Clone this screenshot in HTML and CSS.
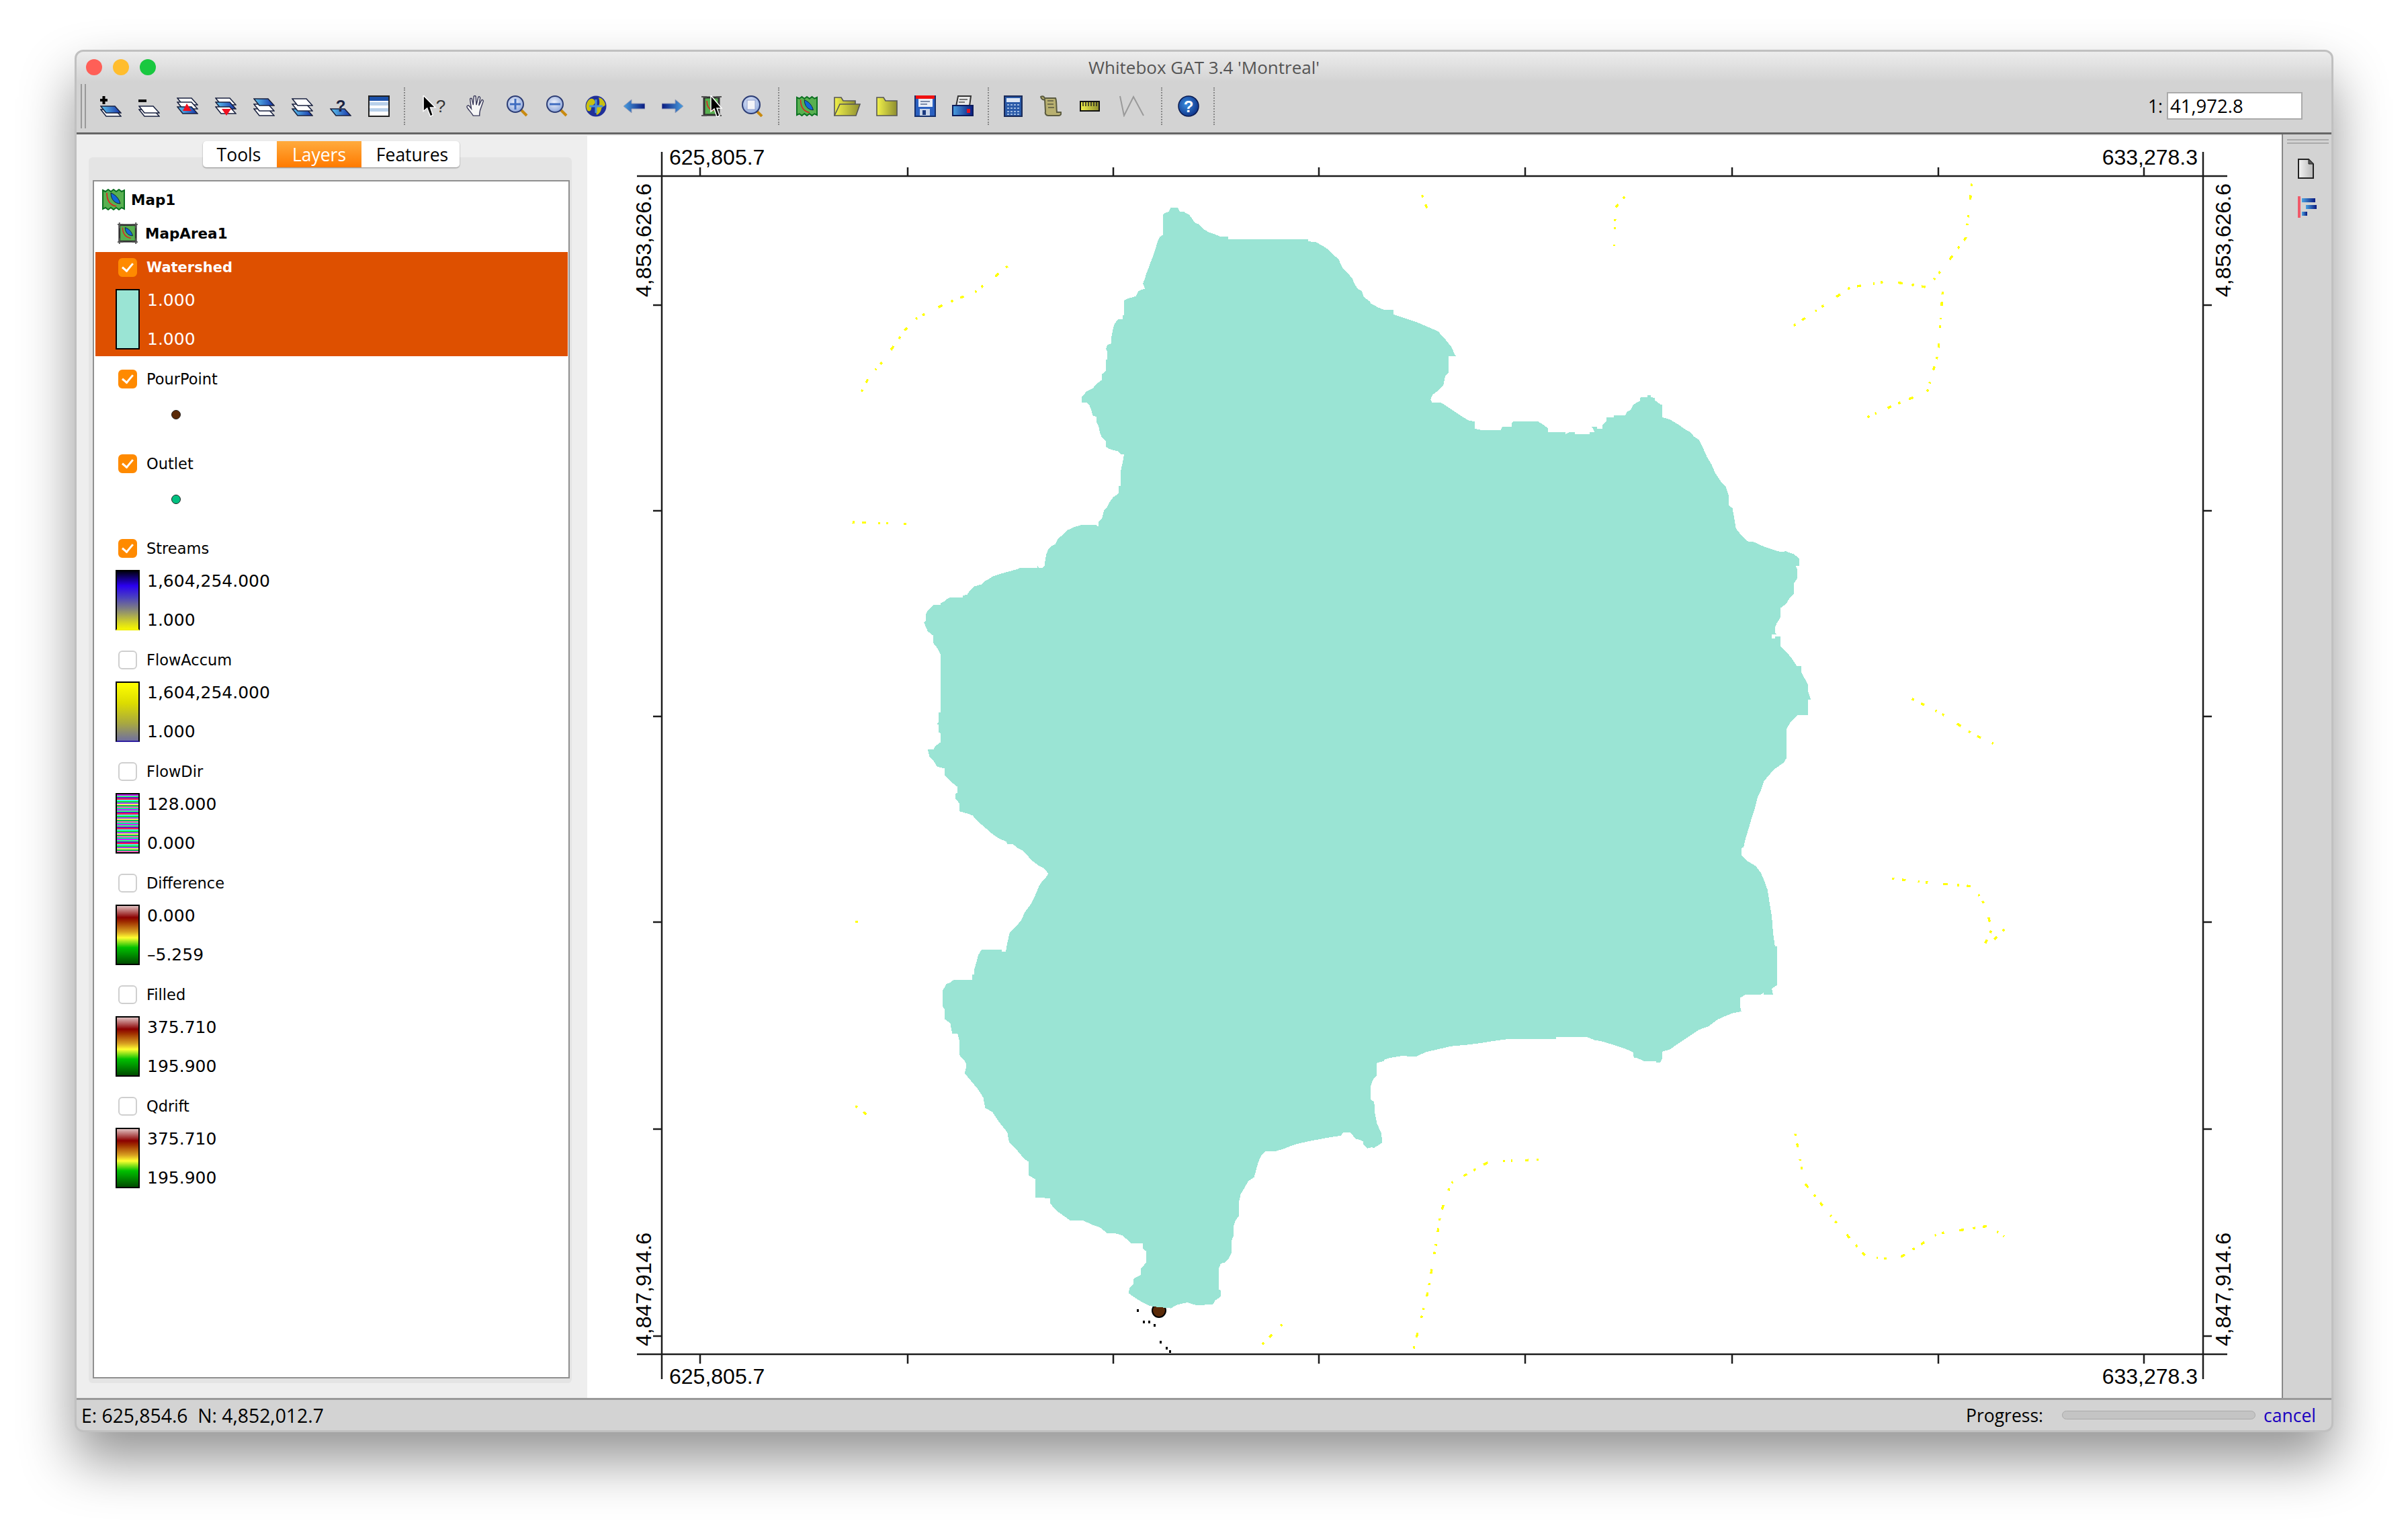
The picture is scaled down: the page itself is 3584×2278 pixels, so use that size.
FILE: index.html
```html
<!DOCTYPE html>
<html lang="en">

<head>
  <meta charset="UTF-8">
  <title>Whitebox GAT 3.4 'Montreal'</title>
  <link rel="stylesheet" href="styles.css">
</head>

<body>

  <!-- toolbar icons -->
  <svg class="icon-defs" xmlns="http://www.w3.org/2000/svg">
    <defs>
      <linearGradient id="g-blue" x1="0" y1="0" x2="1" y2="0"><stop offset="0" stop-color="#5fc8f0"/><stop offset="1" stop-color="#1530a8"/></linearGradient>
      <linearGradient id="g-arrow-l" x1="0" y1="0" x2="1" y2="0"><stop offset="0" stop-color="#4aa0e0"/><stop offset="1" stop-color="#0a1a80"/></linearGradient>
      <linearGradient id="g-arrow-r" x1="0" y1="0" x2="1" y2="0"><stop offset="0" stop-color="#0a1a80"/><stop offset="1" stop-color="#4aa0e0"/></linearGradient>
      <linearGradient id="g-yellow" x1="0" y1="0" x2="1" y2="0"><stop offset="0" stop-color="#f2f24a"/><stop offset="1" stop-color="#8e8e30"/></linearGradient>
      <linearGradient id="g-page" x1="0" y1="0" x2="1" y2="0"><stop offset="0" stop-color="#f4f4f4"/><stop offset="1" stop-color="#b8b8b8"/></linearGradient>
      <radialGradient id="g-glass" cx=".45" cy=".4" r=".6"><stop offset="0" stop-color="#eef2fb"/><stop offset="1" stop-color="#8fa8dc"/></radialGradient>
      <radialGradient id="g-help" cx=".4" cy=".4" r=".7"><stop offset="0" stop-color="#3a8ee0"/><stop offset="1" stop-color="#0a2a80"/></radialGradient>
    </defs>

    <symbol id="plate-blue" viewBox="0 0 32 12"><polygon points="1,1 22,1 31,11 9,11" fill="url(#g-blue)" stroke="#1a2240" stroke-width="1.6"/></symbol>
    <symbol id="plate-white" viewBox="0 0 32 12"><polygon points="1,1 22,1 31,11 9,11" fill="#fff" stroke="#1a2240" stroke-width="1.6"/></symbol>

    <symbol id="i-add" viewBox="0 0 32 32">
      <path d="M3.5 1h4v4h3.5v4H7.500v4h-4V9H0V5h3.500z" fill="#000"/>
      <use href="#plate-white" x="0" y="20" width="32" height="12"/>
      <use href="#plate-blue" x="0" y="15" width="32" height="12"/>
    </symbol>
    <symbol id="i-remove" viewBox="0 0 32 32">
      <rect x="0" y="6" width="12" height="4" fill="#111"/>
      <use href="#plate-white" x="0" y="20" width="32" height="12"/>
      <use href="#plate-white" x="0" y="15" width="32" height="12"/>
    </symbol>
    <symbol id="i-raise" viewBox="0 0 32 32">
      <use href="#plate-white" x="0" y="3" width="32" height="12"/>
      <use href="#plate-white" x="0" y="9" width="32" height="12"/>
      <use href="#plate-blue" x="0" y="16" width="32" height="12"/>
      <polygon points="15,12 22,23 9,23" fill="#f01020"/>
    </symbol>
    <symbol id="i-lower" viewBox="0 0 32 32">
      <use href="#plate-white" x="0" y="3" width="32" height="12"/>
      <use href="#plate-blue" x="0" y="9" width="32" height="12"/>
      <use href="#plate-white" x="0" y="16" width="32" height="12"/>
      <polygon points="10,20 24,20 17,30" fill="#f01020"/>
    </symbol>
    <symbol id="i-top" viewBox="0 0 32 32">
      <use href="#plate-white" x="0" y="19" width="32" height="12"/>
      <use href="#plate-white" x="0" y="12" width="32" height="12"/>
      <use href="#plate-blue" x="0" y="4" width="32" height="12"/>
    </symbol>
    <symbol id="i-bottom" viewBox="0 0 32 32">
      <use href="#plate-blue" x="0" y="19" width="32" height="12"/>
      <use href="#plate-white" x="0" y="12" width="32" height="12"/>
      <use href="#plate-white" x="0" y="4" width="32" height="12"/>
    </symbol>
    <symbol id="i-layer-plate" viewBox="0 0 32 32">
      <use href="#plate-blue" x="0" y="19" width="32" height="12"/>
    </symbol>
    <symbol id="i-table" viewBox="0 0 32 32">
      <rect x="1" y="1" width="30" height="30" fill="#fff" stroke="#222" stroke-width="2"/>
      <rect x="2" y="2" width="28" height="6" fill="#1b50a8"/>
      <rect x="2" y="10" width="28" height="5" fill="#b8d0ea"/>
      <rect x="2" y="19" width="28" height="5" fill="#b8d0ea"/>
    </symbol>
    <symbol id="i-cursor" viewBox="0 0 40 34">
      <polygon points="1,0 1,25 7,20 12,33 16,31 12,19 20,19" fill="#000" stroke="#fff" stroke-width="1.500"/>
    </symbol>
    <symbol id="i-hand" viewBox="0 0 32 34">
      <path d="M11 32C8 27 2 21 1 18c0-2 2-3 4-1l3 4L6 6c0-2 3-2 3 0l2 9 1-13c0-2 3-2 3 0l1 13 3-12c1-2 3-1 3 1l-2 12 4-8c1-2 3-1 3 1l-5 14c-1 4-1 7-1 9z" fill="#f6f6f6" stroke="#3a3a5a" stroke-width="1.500"/>
    </symbol>
    <symbol id="i-zoom-in" viewBox="0 0 32 32">
      <path d="M21 21l9 9" stroke="#c88a10" stroke-width="4"/>
      <circle cx="13" cy="13" r="12" fill="url(#g-glass)" stroke="#2c3c74" stroke-width="2"/>
      <path d="M5 13h16M13 5v16" stroke="#3f6cc0" stroke-width="3"/>
    </symbol>
    <symbol id="i-zoom-out" viewBox="0 0 32 32">
      <path d="M21 21l9 9" stroke="#c88a10" stroke-width="4"/>
      <circle cx="13" cy="13" r="12" fill="url(#g-glass)" stroke="#2c3c74" stroke-width="2"/>
      <path d="M5 13h16" stroke="#3f6cc0" stroke-width="3"/>
    </symbol>
    <symbol id="i-globe" viewBox="0 0 32 32">
      <circle cx="16" cy="16" r="15.500" fill="#20309a"/>
      <path d="M6 6c5-3 8 0 9 4-1 4-5 4-6 9 0 4-3 6-6 3C0 16 2 10 6 6zM20 3c5 1 9 5 10 11-2 3-5 2-6 6-1 5-4 8-7 9-1-5-2-9 1-12 4-2 4-7 2-14z" fill="#c8c010"/>
      <path d="M16 6v20M6 16h20" stroke="#4a90d8" stroke-width="3"/>
    </symbol>
    <symbol id="i-arrow-left" viewBox="0 0 32 32">
      <polygon points="0,16 12,6 12,12 32,12 32,20 12,20 12,26" fill="url(#g-arrow-l)" stroke="#9aa0b8" stroke-width="1"/>
    </symbol>
    <symbol id="i-arrow-right" viewBox="0 0 32 32">
      <polygon points="32,16 20,6 20,12 0,12 0,20 20,20 20,26" fill="url(#g-arrow-r)" stroke="#9aa0b8" stroke-width="1"/>
    </symbol>
    <symbol id="i-map" viewBox="0 0 34 32">
      <path d="M1 2l4 2 4-3 4 3 4-3 4 3 4-3 4 3 4-2v28l-4-2-4 3-4-3-4 3-4-3-4 3-4-3-4 2z" fill="#58b050" stroke="#0a7020" stroke-width="2"/>
      <path d="M7 6c0 10 4 18 14 20" fill="none" stroke="#e02020" stroke-width="1.600"/>
      <path d="M13 6c7 3 12 8 14 16-8 0-14-6-14-16z" fill="#1068d8" stroke="#123" stroke-width="1"/>
    </symbol>
    <symbol id="i-maparea" viewBox="0 0 34 34">
      <rect x="4" y="4" width="26" height="26" fill="#58b050" stroke="#333" stroke-width="3"/>
      <path d="M1 3h9M24 3h9M1 31h9M24 31h9M4 0v9M30 0v9M4 25v9M30 25v9" stroke="#555" stroke-width="2"/>
      <path d="M9 8c0 9 3 15 13 17" fill="none" stroke="#e02020" stroke-width="1.500"/>
      <path d="M13 8c6 2 10 6 12 13-7 0-12-5-12-13z" fill="#1068d8" stroke="#123" stroke-width="1"/>
    </symbol>
    <symbol id="i-map-select" viewBox="0 0 32 32">
      <rect x="4" y="3" width="22" height="26" fill="#58b050" stroke="#333" stroke-width="3"/>
      <path d="M0 2h8M22 2h8M0 30h8M22 30h8" stroke="#555" stroke-width="2"/>
      <path d="M8 8c0 8 3 13 10 15" fill="none" stroke="#e02020" stroke-width="1.500"/>
      <polygon points="14,0 14,24 19,20 23,32 27,30 23,19 30,19" fill="#000" stroke="#fff" stroke-width="1.500"/>
    </symbol>
    <symbol id="i-zoom-full" viewBox="0 0 32 32">
      <path d="M21 22l9 9" stroke="#c88a10" stroke-width="4"/>
      <circle cx="14" cy="14" r="13" fill="url(#g-glass)" stroke="#2c3c74" stroke-width="2"/>
      <rect x="8" y="7" width="12" height="14" fill="#f4f4f8" stroke="#8c9ccc" stroke-width="1"/>
    </symbol>
    <symbol id="i-folder-open" viewBox="0 0 40 32">
      <path d="M1 30V3h10l3 5h18v6" fill="url(#g-yellow)" stroke="#555" stroke-width="1.600"/>
      <polygon points="1,30 9,13 39,13 33,30" fill="url(#g-yellow)" stroke="#555" stroke-width="1.600"/>
    </symbol>
    <symbol id="i-folder" viewBox="0 0 32 32">
      <path d="M1 30V3h10l3 5h17v22z" fill="url(#g-yellow)" stroke="#555" stroke-width="1.600"/>
    </symbol>
    <symbol id="i-save" viewBox="0 0 32 32">
      <rect x="1" y="1" width="30" height="30" fill="#2a60c0" stroke="#15306c" stroke-width="2"/>
      <rect x="2" y="0" width="28" height="5" fill="#f01010"/>
      <rect x="6" y="5" width="21" height="12" fill="#e8eef8"/>
      <path d="M9 9h14M9 13h10" stroke="#7a8aa8" stroke-width="2"/>
      <rect x="8" y="20" width="15" height="10" fill="#c8d4e8"/>
      <rect x="12" y="22" width="5" height="7" fill="#1a3a80"/>
    </symbol>
    <symbol id="i-print" viewBox="0 0 32 32">
      <polygon points="9,1 28,1 26,16 6,16" fill="#e8e8e8" stroke="#333" stroke-width="2"/>
      <path d="M11 6h12M10 10h9" stroke="#777" stroke-width="2"/>
      <path d="M1 15h30v15H1z" fill="url(#g-arrow-l)" stroke="#0c1c5c" stroke-width="2"/>
      <rect x="22" y="20" width="5" height="6" fill="#e01020"/>
    </symbol>
    <symbol id="i-calc" viewBox="0 0 28 32">
      <rect x="1" y="1" width="26" height="30" fill="#2a5aa8" stroke="#1a2a58" stroke-width="2"/>
      <rect x="4" y="4" width="20" height="6" fill="#dce6f4"/>
      <path d="M5 14h18M5 19h18M5 24h18M5 28h18" stroke="#9cb8e0" stroke-width="2" stroke-dasharray="3 2"/>
    </symbol>
    <symbol id="i-script" viewBox="0 0 32 32">
      <path d="M1 2c3-2 5 0 6 2h16c2 4 1 14 2 21h6c1 3-1 5-3 5H12c-3 0-5-3-4-6L7 6C5 7 2 6 1 2z" fill="#b8b070" stroke="#5a5a40" stroke-width="2"/>
      <path d="M11 8h9M11 13h9M12 18h9" stroke="#5a5a40" stroke-width="1.600"/>
    </symbol>
    <symbol id="i-ruler" viewBox="0 0 30 32">
      <rect x="1" y="9" width="28" height="14" fill="url(#g-yellow)" stroke="#111" stroke-width="2"/>
      <path d="M5 10v6M9 10v6M13 10v6M17 10v6M21 10v6M25 10v6" stroke="#222" stroke-width="1.500"/>
    </symbol>
    <symbol id="i-line" viewBox="0 0 38 32">
      <path d="M1 1l6 29L21 2l15 28" fill="none" stroke="#9a9a9a" stroke-width="2"/>
    </symbol>
    <symbol id="i-help-disc" viewBox="0 0 32 32">
      <circle cx="16" cy="16" r="15" fill="url(#g-help)" stroke="#0a1a50" stroke-width="1.500"/>
    </symbol>
    <symbol id="i-page" viewBox="0 0 24 30">
      <path d="M1 1h15l7 7v21H1z" fill="url(#g-page)" stroke="#222" stroke-width="2"/>
      <path d="M16 1v7h7" fill="#555" stroke="#222" stroke-width="1"/>
    </symbol>
    <symbol id="i-align" viewBox="0 0 30 32">
      <rect x="0" y="0" width="4" height="32" fill="#f05a6a"/>
      <rect x="6" y="3" width="20" height="6" fill="url(#g-arrow-r)" transform="rotate(180 16 6)"/>
      <rect x="12" y="13" width="16" height="6" fill="url(#g-arrow-l)"/>
      <rect x="6" y="23" width="8" height="6" fill="url(#g-arrow-l)"/>
    </symbol>
  </svg>

  <div class="window">
    <div class="titlebar">
      <span class="light red"></span>
      <span class="light yellow"></span>
      <span class="light green"></span>
      <span class="title">Whitebox GAT 3.4 'Montreal'</span>
    </div>

    <div class="toolbar">
      <div class="gripper"></div>

      <div class="group g1">
        <span class="tool"><svg class="ico"><use href="#i-add"/></svg></span>
        <span class="tool"><svg class="ico"><use href="#i-remove"/></svg></span>
        <span class="tool"><svg class="ico"><use href="#i-raise"/></svg></span>
        <span class="tool"><svg class="ico"><use href="#i-lower"/></svg></span>
        <span class="tool"><svg class="ico"><use href="#i-top"/></svg></span>
        <span class="tool"><svg class="ico"><use href="#i-bottom"/></svg></span>
        <span class="tool"><svg class="ico" viewBox="0 0 32 32"><use href="#i-layer-plate"/><text x="16" y="24" class="icon-q">?</text></svg></span>
        <span class="tool"><svg class="ico"><use href="#i-table"/></svg></span>
      </div>
      <div class="sep"></div>

      <div class="group g2">
        <span class="tool"><svg class="ico wide" viewBox="0 0 40 32"><use href="#i-cursor"/><text x="28" y="25" class="icon-q dark">?</text></svg></span>
        <span class="tool"><svg class="ico"><use href="#i-hand"/></svg></span>
        <span class="tool"><svg class="ico"><use href="#i-zoom-in"/></svg></span>
        <span class="tool"><svg class="ico"><use href="#i-zoom-out"/></svg></span>
        <span class="tool"><svg class="ico"><use href="#i-globe"/></svg></span>
        <span class="tool"><svg class="ico"><use href="#i-arrow-left"/></svg></span>
        <span class="tool"><svg class="ico"><use href="#i-arrow-right"/></svg></span>
        <span class="tool"><svg class="ico"><use href="#i-map-select"/></svg></span>
        <span class="tool"><svg class="ico"><use href="#i-zoom-full"/></svg></span>
      </div>
      <div class="sep"></div>

      <div class="group g3">
        <span class="tool"><svg class="ico"><use href="#i-map"/></svg></span>
        <span class="tool"><svg class="ico wide"><use href="#i-folder-open"/></svg></span>
        <span class="tool"><svg class="ico"><use href="#i-folder"/></svg></span>
        <span class="tool"><svg class="ico"><use href="#i-save"/></svg></span>
        <span class="tool"><svg class="ico"><use href="#i-print"/></svg></span>
      </div>
      <div class="sep"></div>

      <div class="group g4">
        <span class="tool"><svg class="ico"><use href="#i-calc"/></svg></span>
        <span class="tool"><svg class="ico"><use href="#i-script"/></svg></span>
        <span class="tool"><svg class="ico"><use href="#i-ruler"/></svg></span>
        <span class="tool"><svg class="ico wide"><use href="#i-line"/></svg></span>
      </div>
      <div class="sep"></div>

      <div class="group g5">
        <span class="tool"><svg class="ico" viewBox="0 0 32 32"><use href="#i-help-disc"/><text x="16" y="25" class="icon-q light">?</text></svg></span>
      </div>
      <div class="sep"></div>

      <div class="scale">
        <span>1:</span>
        <div class="scale-value">41,972.8</div>
      </div>
    </div>

    <div class="main">
      <div class="panel">
        <div class="tabs">
          <span class="tab tab-tools">Tools</span>
          <span class="tab tab-layers active">Layers</span>
          <span class="tab tab-features">Features</span>
        </div>

        <div class="pane">
          <div class="tree">
            <div class="tree-map">
              <svg class="map-ico"><use href="#i-map"/></svg>
              <span>Map1</span>
            </div>
            <div class="tree-area">
              <svg class="map-ico"><use href="#i-maparea"/></svg>
              <span>MapArea1</span>
            </div>

            <div class="layer selected">
              <div class="layer-head"><span class="check on"></span><span class="layer-name">Watershed</span></div>
              <div class="legend">
                <div class="swatch sw-watershed"></div>
                <div class="values"><span>1.000</span><span>1.000</span></div>
              </div>
            </div>

            <div class="layer vector">
              <div class="layer-head"><span class="check on"></span><span class="layer-name">PourPoint</span></div>
              <div class="dot dot-pour"></div>
            </div>

            <div class="layer vector">
              <div class="layer-head"><span class="check on"></span><span class="layer-name">Outlet</span></div>
              <div class="dot dot-outlet"></div>
            </div>

            <div class="layer">
              <div class="layer-head"><span class="check on"></span><span class="layer-name">Streams</span></div>
              <div class="legend">
                <div class="swatch sw-streams"></div>
                <div class="values"><span>1,604,254.000</span><span>1.000</span></div>
              </div>
            </div>

            <div class="layer">
              <div class="layer-head"><span class="check"></span><span class="layer-name">FlowAccum</span></div>
              <div class="legend">
                <div class="swatch sw-flowaccum"></div>
                <div class="values"><span>1,604,254.000</span><span>1.000</span></div>
              </div>
            </div>

            <div class="layer">
              <div class="layer-head"><span class="check"></span><span class="layer-name">FlowDir</span></div>
              <div class="legend">
                <div class="swatch sw-flowdir"></div>
                <div class="values"><span>128.000</span><span>0.000</span></div>
              </div>
            </div>

            <div class="layer">
              <div class="layer-head"><span class="check"></span><span class="layer-name">Difference</span></div>
              <div class="legend">
                <div class="swatch sw-dem"></div>
                <div class="values"><span>0.000</span><span>–5.259</span></div>
              </div>
            </div>

            <div class="layer">
              <div class="layer-head"><span class="check"></span><span class="layer-name">Filled</span></div>
              <div class="legend">
                <div class="swatch sw-dem"></div>
                <div class="values"><span>375.710</span><span>195.900</span></div>
              </div>
            </div>

            <div class="layer">
              <div class="layer-head"><span class="check"></span><span class="layer-name">Qdrift</span></div>
              <div class="legend">
                <div class="swatch sw-dem"></div>
                <div class="values"><span>375.710</span><span>195.900</span></div>
              </div>
            </div>
          </div>
        </div>
      </div>

      <div class="map">
        <!-- viewBox is in page coordinates so the map items can be read straight off the picture -->
        <svg class="map-canvas" viewBox="874 202 2522 1878" xmlns="http://www.w3.org/2000/svg">
          <circle cx="1725" cy="1950" r="10" class="pour"/>

          <g class="watershed">
            <g transform="translate(1360 290) scale(.4464)">
              <polygon points="90,1568 90,1532 78,1510 66,1495 66,1470 47,1455 40,1440 34,1425 40,1420 40,1398 47,1385 58,1374 66,1366 90,1366 90,1360 103,1355 108,1348 122,1342 164,1342 164,1336 178,1332 188,1318 202,1305 226,1298 237,1287 251,1280 262,1272 293,1262 318,1255 343,1248 356,1243 412,1243 412,1236 418,1243 430,1243 436,1236 438,1220 442,1198 448,1182 460,1170 473,1163 480,1148 497,1132 511,1118 535,1107 560,1100 608,1100 616,1106 616,1090 627,1080 634,1052 645,1040 652,1025 665,1008 683,995 683,970 690,970 690,920 697,890 701,865 690,865 683,855 670,852 652,847 641,840 641,822 627,808 620,790 616,770 609,758 609,740 597,735 591,715 585,700 577,692 560,692 560,674 572,660 578,654 597,645 609,630 627,617 627,598 641,586 641,548 645,548 645,522 641,514 645,500 659,495 659,475 665,445 670,428 683,414 697,414 697,402 701,400 701,352 715,345 740,338 750,320 771,312 764,295 771,278 775,264 782,246 788,228 795,212 800,197 806,180 813,155 820,140 831,133 831,67 838,60 851,56 856,43 880,43 887,56 900,56 918,66 930,82 937,92 950,98 968,115 985,125 1006,132 1024,140 1048,140 1048,148 1315,148 1315,155 1340,157 1364,170 1382,182 1395,196 1417,215 1430,245 1445,258 1463,280 1475,310 1494,320 1500,340 1520,355 1525,365 1555,378 1568,383 1600,383 1600,1600 90,1600"/>
            </g>
            <g transform="translate(2000 290) scale(.4719)">
              <polygon points="-40,233 0,233 12,247 28,273 45,297 58,320 80,340 100,350 127,368 160,378 197,390 232,402 262,415 297,430 320,455 340,480 350,503 354,508 331,508 331,560 320,572 314,600 296,618 280,630 274,645 278,655 307,655 330,670 350,683 372,698 395,712 413,714 413,737 437,742 495,742 500,731 530,731 530,718 536,714 612,714 630,725 645,737 645,748 698,748 700,754 712,748 728,748 730,754 776,754 776,748 792,748 782,731 798,731 800,737 816,737 816,725 828,714 828,701 852,701 852,695 888,695 893,684 905,678 911,665 922,655 934,650 934,642 940,637 958,637 958,631 968,631 968,637 980,640 982,648 998,660 1004,662 1004,701 1028,708 1057,725 1075,738 1092,748 1105,762 1120,772 1132,795 1145,825 1160,850 1172,878 1190,905 1205,920 1215,950 1214,978 1226,988 1232,1022 1237,1052 1250,1068 1273,1092 1297,1095 1315,1105 1343,1115 1375,1125 1395,1124 1420,1133 1437,1147 1437,1170 1426,1170 1430,1180 1430,1210 1420,1225 1420,1258 1407,1270 1395,1290 1377,1303 1377,1333 1366,1350 1360,1365 1360,1380 1365,1385 1350,1385 1350,1398 1360,1398 1360,1392 1377,1392 1377,1422 1395,1440 1412,1460 1425,1480 1437,1500 1454,1525 1465,1545 1465,1640 -40,1640"/>
            </g>
            <g transform="translate(1360 1000) scale(.4464 .606)">
              <polygon points="90,-20 90,98 83,100 83,122 78,128 83,130 83,148 90,150 90,172 72,182 66,190 47,190 52,207 66,218 78,232 103,237 103,254 122,268 146,282 146,296 140,298 140,312 152,322 152,342 178,347 196,352 215,368 232,378 258,395 282,408 308,416 312,422 330,422 346,432 362,438 378,450 398,465 418,476 430,480 442,488 448,495 442,503 430,512 418,525 405,548 390,570 370,590 358,610 340,625 320,640 312,665 307,686 293,686 293,682 226,682 215,695 208,715 202,730 202,742 196,742 196,756 133,756 122,762 108,766 97,782 97,822 103,828 103,852 122,862 128,888 146,888 152,905 152,940 170,955 176,965 170,985 190,1003 215,1025 232,1045 238,1070 262,1080 285,1105 312,1130 318,1155 340,1170 368,1195 382,1202 382,1235 405,1245 405,1290 455,1292 455,1305 480,1325 510,1340 522,1347 566,1347 598,1358 620,1363 645,1378 672,1378 695,1383 725,1402 764,1402 764,1416 775,1422 775,1450 757,1465 757,1480 732,1490 732,1503 720,1512 716,1525 735,1535 757,1545 783,1555 800,1558 857,1562 880,1553 912,1548 945,1555 998,1552 1005,1543 1024,1533 1024,1518 1017,1516 1017,1465 1024,1452 1036,1450 1048,1442 1060,1425 1060,1395 1066,1385 1066,1360 1074,1345 1084,1335 1084,1302 1090,1282 1100,1270 1115,1250 1135,1240 1148,1205 1158,1188 1172,1177 1205,1177 1235,1170 1270,1160 1316,1152 1382,1143 1425,1138 1432,1130 1455,1130 1478,1145 1497,1152 1510,1165 1535,1168 1560,1155 1558,1130 1545,1110 1538,1085 1535,1055 1524,1050 1524,1015 1532,1000 1543,990 1543,960 1568,955 1600,-20"/>
            </g>
            <g transform="translate(2000 1000) scale(.4719)">
              <polygon points="1443,-20 1443,0 1458,30 1465,62 1473,87 1455,87 1455,103 1440,122 1428,140 1408,160 1396,180 1396,272 1388,285 1360,305 1338,328 1325,345 1315,375 1305,395 1295,435 1285,465 1275,500 1267,525 1261,553 1254,555 1254,577 1275,597 1300,612 1315,632 1327,660 1337,688 1343,728 1350,770 1354,822 1360,865 1367,865 1367,987 1350,998 1354,1017 1325,1017 1325,1010 1315,1017 1267,1017 1254,1025 1250,1027 1250,1055 1254,1070 1228,1075 1207,1083 1180,1095 1150,1117 1120,1128 1090,1148 1057,1170 1028,1190 1004,1197 1004,1220 998,1232 985,1232 985,1226 945,1226 928,1218 915,1215 912,1198 888,1188 850,1175 816,1165 790,1160 765,1150 670,1150 670,1157 520,1157 473,1163 430,1170 390,1175 337,1180 307,1187 260,1198 226,1213 184,1210 144,1217 114,1227 104,1233 104,1272 92,1285 85,1302 85,1355 92,1380 97,1410 104,1432 110,1448 115,1467 121,1467 121,1484 104,1495 74,1502 62,1490 60,1477 38,1472 28,1460 22,1448 0,1448 -40,1448 -40,-20"/>
            </g>
          </g>

          <g class="streams" transform="scale(2.2857)">
            <polyline points="561,255 566,245 575,235 590,214 597,207 615,198 635,190 648,180 660,170"/>
            <polyline points="926,127 929,135 933,141"/>
            <polyline points="1058,128 1052,135 1051,160"/>
            <polyline points="1168,212 1180,204 1205,187 1230,183 1255,187 1265,175 1280,155 1283,130 1284,118"/>
            <polyline points="1265,190 1262,230 1255,255 1235,263 1213,273"/>
            <polyline points="555,340 590,341"/>
            <polyline points="1245,455 1265,465 1285,478 1300,485"/>
            <polyline points="1232,572 1260,575 1285,577 1293,590 1297,605 1290,620"/>
            <polyline points="1305,605 1298,612"/>
            <polyline points="557,600 560,600"/>
            <polyline points="557,720 565,726"/>
            <polyline points="1002,755 970,756 945,770 938,790 935,810 930,840 920,880"/>
            <polyline points="1169,738 1175,770 1195,795 1215,818 1235,820 1262,803 1295,798 1305,805"/>
            <polyline points="822,875 835,862"/>
          </g>

          <g class="outlet-specks">
            <rect x="1692" y="1948" width="3" height="4"/>
            <rect x="1701" y="1965" width="3" height="4"/>
            <rect x="1709" y="1965" width="3" height="4"/>
            <rect x="1717" y="1970" width="3" height="4"/>
            <rect x="1726" y="1995" width="3" height="4"/>
            <rect x="1735" y="2004" width="3" height="4"/>
            <rect x="1740" y="2009" width="3" height="4"/>
          </g>

          <g class="frame">
            <path d="M948 262H3315M948 2015H3315M985 226V2052M3279 226V2052"/>
            <path d="M1042 249V262M1351 249V262M1657 249V262M1963 249V262M2270 249V262M2578 249V262M2885 249V262M3191 249V262"/>
            <path d="M1042 2015V2029M1351 2015V2029M1657 2015V2029M1963 2015V2029M2270 2015V2029M2578 2015V2029M2885 2015V2029M3191 2015V2029"/>
            <path d="M972 454H985M972 760H985M972 1066H985M972 1372H985M972 1680H985M972 1988H985"/>
            <path d="M3279 454H3292M3279 760H3292M3279 1066H3292M3279 1372H3292M3279 1680H3292M3279 1988H3292"/>
          </g>

          <g class="coords">
            <text x="996" y="245">625,805.7</text>
            <text x="3271" y="245" text-anchor="end">633,278.3</text>
            <text x="996" y="2059">625,805.7</text>
            <text x="3271" y="2059" text-anchor="end">633,278.3</text>
            <text transform="translate(969 442) rotate(-90)">4,853,626.6</text>
            <text transform="translate(3320 442) rotate(-90)">4,853,626.6</text>
            <text transform="translate(969 2003) rotate(-90)">4,847,914.6</text>
            <text transform="translate(3320 2003) rotate(-90)">4,847,914.6</text>
          </g>
        </svg>
      </div>

      <div class="sidebar">
        <div class="side-grip"></div>
        <svg class="side-ico page"><use href="#i-page"/></svg>
        <svg class="side-ico align"><use href="#i-align"/></svg>
      </div>
    </div>

    <div class="statusbar">
      <span class="coordinates">E: 625,854.6&nbsp; N: 4,852,012.7</span>
      <span class="progress-label">Progress:</span>
      <div class="progress"></div>
      <span class="cancel">cancel</span>
    </div>
  </div>

</body>

</html>
```

FILE: styles.css
```css
html,
body {
  margin: 0;
  background: #fff;
}

body {
  height: 2278px;
  overflow: hidden;
  font-family: "Open Sans", sans-serif;
  color: #000;
}

.icon-defs {
  display: block;
  width: 0;
  height: 0;
}

.icon-q {
  font-family: "Liberation Sans", sans-serif;
  font-size: 24px;
  font-weight: bold;
  text-anchor: middle;
  fill: #1a2240;
}

.icon-q.dark {
  font-size: 26px;
  font-weight: normal;
  fill: #333;
}

.icon-q.light {
  font-size: 24px;
  fill: #fff;
}

.window {
  box-sizing: border-box;
  width: 3362px;
  height: 2057px;
  margin: 74px 0 0 111px;
  display: flex;
  flex-direction: column;
  background: #d3d3d3;
  border: 3px solid #c0c0c0;
  border-radius: 13px;
  box-shadow: 0 42px 80px rgba(0, 0, 0, 0.42);
  overflow: hidden;
}

/* title bar */
.titlebar {
  height: 45px;
  display: flex;
  align-items: center;
  padding: 0 0 0 14px;
  gap: 16px;
  background: linear-gradient(#ececec, #d3d3d3);
  position: relative;
}

.light {
  width: 24px;
  height: 24px;
  border-radius: 50%;
}

.light.red { background: #ff5f57; }
.light.yellow { background: #ffbd2e; }
.light.green { background: #19c840; }

.title {
  position: absolute;
  left: 0;
  right: 0;
  text-align: center;
  font-size: 26px;
  color: #555;
}

/* tool bar */
.toolbar {
  box-sizing: border-box;
  height: 78px;
  display: flex;
  align-items: center;
  padding: 0 43px 4px 6px;
  border-bottom: 3px solid #666;
}

.gripper {
  width: 4px;
  height: 66px;
  margin-right: 8px;
  border-left: 2px solid #999;
  border-right: 2px solid #999;
}

.group {
  display: grid;
  grid-auto-flow: column;
  align-items: center;
}

.g1 { padding-right: 9px; grid-auto-columns: 57px; }
.g2 { padding: 0 8px 0 15px; grid-template-columns: 60.5px 61.5px 59.5px 59px 57.5px 56px 57.5px 60px 60.5px; }
.g3 { padding: 0 9px 0 11px; grid-template-columns: 59.5px 60.5px 58px 56px 56px; }
.g4 { padding: 0 10.5px 0 8px; grid-template-columns: 56px 55.5px 61px 65px; }
.g5 { padding: 0 8px 0 10px; grid-template-columns: 58px; }

.tool {
  height: 36px;
  display: flex;
  align-items: center;
  justify-content: center;
}

.ico {
  width: 32px;
  height: 32px;
}

.ico.wide {
  width: 40px;
}

.sep {
  height: 56px;
  border-left: 2px dotted #888;
}

.scale {
  margin-left: auto;
  display: flex;
  align-items: center;
  gap: 6px;
  font-size: 26.5px;
}

.scale-value {
  box-sizing: border-box;
  width: 202px;
  height: 41px;
  line-height: 37px;
  padding-left: 3px;
  background: #fff;
  border: 2px solid #aaa;
  font-size: 27.5px;
}

/* main area */
.main {
  flex: 1;
  display: flex;
  border-bottom: 3px solid #999;
  min-height: 0;
}

.panel {
  box-sizing: border-box;
  width: 760px;
  padding: 10px 23px 0 18px;
  background: #eee;
}

.tabs {
  position: relative;
  z-index: 1;
  display: flex;
  width: 382px;
  height: 39px;
  margin: 0 0 -15px 170px;
  background: #fff;
  border-radius: 5px;
  box-shadow: 0 1px 2px rgba(0, 0, 0, 0.4);
  overflow: hidden;
}

.tab {
  box-sizing: border-box;
  display: flex;
  align-items: center;
  justify-content: center;
  font-size: 26.5px;
}

.tab-tools { width: 110px; padding-right: 3px; }
.tab-layers { width: 126px; }
.tab-features { width: 146px; padding-left: 5px; }

.tab.active {
  color: #fff;
  background: linear-gradient(#ffab3d, #ff7a00);
}

.pane {
  box-sizing: border-box;
  height: 1824px;
  padding: 34px 3px 0 6px;
  background: #e4e4e4;
  border-radius: 6px;
}

.tree {
  box-sizing: border-box;
  height: 1783px;
  padding: 2px 1px 0 2px;
  background: #fff;
  border: 2px solid #8f8f8f;
  font-family: "DejaVu Sans", sans-serif;
}

.tree-map,
.tree-area {
  height: 50px;
  display: flex;
  align-items: center;
  font-size: 21.5px;
  font-weight: bold;
}

.tree-map { padding-left: 10px; }
.tree-area { padding-left: 31px; height: 53px; padding-bottom: 3px; box-sizing: border-box; }

.map-ico {
  width: 34px;
  height: 32px;
  margin-right: 9px;
}

/* layer rows */
.layer {
  height: 155px;
  margin-bottom: 11px;
}

.layer.vector {
  height: 126px;
  margin-bottom: 0;
}

.layer.selected {
  color: #fff;
  background: #de5000;
}

.layer.selected .layer-name {
  font-size: 21px;
  font-weight: bold;
}

.layer-head {
  height: 46px;
  display: flex;
  align-items: center;
  padding-left: 34px;
}

.layer-name {
  margin-left: 14px;
  font-size: 22.5px;
}

.check {
  box-sizing: border-box;
  position: relative;
  width: 28px;
  height: 28px;
  background: #fff;
  border: 2px solid #cfcfcf;
  border-radius: 6px;
}

.check.on {
  background: #ff8a00;
  border-color: #ff8a00;
}

.check.on::after {
  content: "";
  position: absolute;
  left: 7px;
  top: 2px;
  width: 7px;
  height: 13px;
  border: solid #fff;
  border-width: 0 3px 3px 0;
  transform: rotate(40deg);
}

.legend {
  display: flex;
  margin: 9px 0 0 30px;
}

.swatch {
  box-sizing: border-box;
  width: 36px;
  height: 90px;
  border: 2px solid #000;
}

.sw-watershed {
  background: #9ae4d4;
}

.sw-streams {
  background: linear-gradient(#000010, #2a00f0 25%, #4a40c0 45%, #808080 65%, #d8d820 90%, #f6f600);
  border-bottom-color: #f0f000;
}

.sw-flowaccum {
  background: linear-gradient(#ffff00, #dcdc00 35%, #a8a840 70%, #7070a0);
  border-bottom-color: #3020a0;
}

.sw-flowdir {
  background: repeating-linear-gradient(#d020ff 0 2px, #30ff80 2px 4px, #7010c0 4px 6px, #ff2050 6px 8px, #40ffe0 8px 10px, #10e030 10px 12px, #a040ff 12px 14px, #f0f060 14px 16px, #00c050 16px 18px, #ff60c0 18px 20px, #00f090 20px 22px);
}

.sw-dem {
  background: linear-gradient(#e0c0c0, #8b0000 20%, #a03000 28%, #d8a020 45%, #ffff30 55%, #00c000 72%, #00a000 80%, #004c00);
}

.values {
  box-sizing: border-box;
  display: flex;
  flex-direction: column;
  justify-content: space-between;
  height: 90px;
  padding-top: 2px;
  margin-left: 11px;
  font-size: 25px;
  line-height: 30px;
}

.dot {
  box-sizing: border-box;
  width: 14px;
  height: 14px;
  margin: 23px 0 0 113px;
  border: 1px solid #222;
  border-radius: 50%;
}

.dot-pour { background: #5a2a08; }
.dot-outlet { background: #00c080; }

/* map */
.map {
  width: 2524px;
  padding-top: 2px;
  background: #eee;
  box-sizing: border-box;
  border-right: 2px solid #888;
}

.map-canvas {
  display: block;
  width: 2522px;
  height: 1878px;
  background: #fff;
}

.watershed polygon {
  fill: #9ae4d4;
  shape-rendering: crispEdges;
}

.pour {
  fill: #5a2a08;
  stroke: #000;
  stroke-width: 2;
}

.streams polyline {
  fill: none;
  stroke: #ffff00;
  stroke-width: 1.5;
  stroke-dasharray: 1.5 5 2.5 8 1 4 1.5 10 3 6;
  shape-rendering: crispEdges;
}

.outlet-specks rect {
  fill: #000;
}

.frame path {
  fill: none;
  stroke: #1c1c1c;
  stroke-width: 2.5;
}

.coords text {
  font-family: "Liberation Sans", sans-serif;
  font-size: 32px;
  fill: #000;
}

/* right hand strip */
.sidebar {
  flex: 1;
  display: flex;
  flex-direction: column;
  padding: 7px 0 0 6px;
}

.side-grip {
  width: 62px;
  height: 3px;
  border-top: 2px solid #aaa;
  border-bottom: 2px solid #aaa;
}

.side-ico {
  display: block;
  margin-left: 16px;
}

.side-ico.page {
  width: 24px;
  height: 30px;
  margin-top: 22px;
}

.side-ico.align {
  width: 30px;
  height: 32px;
  margin-top: 26px;
}

/* status bar */
.statusbar {
  flex: none;
  height: 45px;
  display: flex;
  align-items: center;
  padding: 0 23px 0 7px;
  font-size: 26.5px;
}

.coordinates {
  font-size: 28.3px;
}

.progress-label {
  margin-left: auto;
}

.progress {
  box-sizing: border-box;
  width: 288px;
  height: 13px;
  margin: 0 12px 0 28px;
  background: #c4c4c4;
  border: 1px solid #aaa;
  border-radius: 7px;
}

.cancel {
  color: #1a00c0;
}
```
